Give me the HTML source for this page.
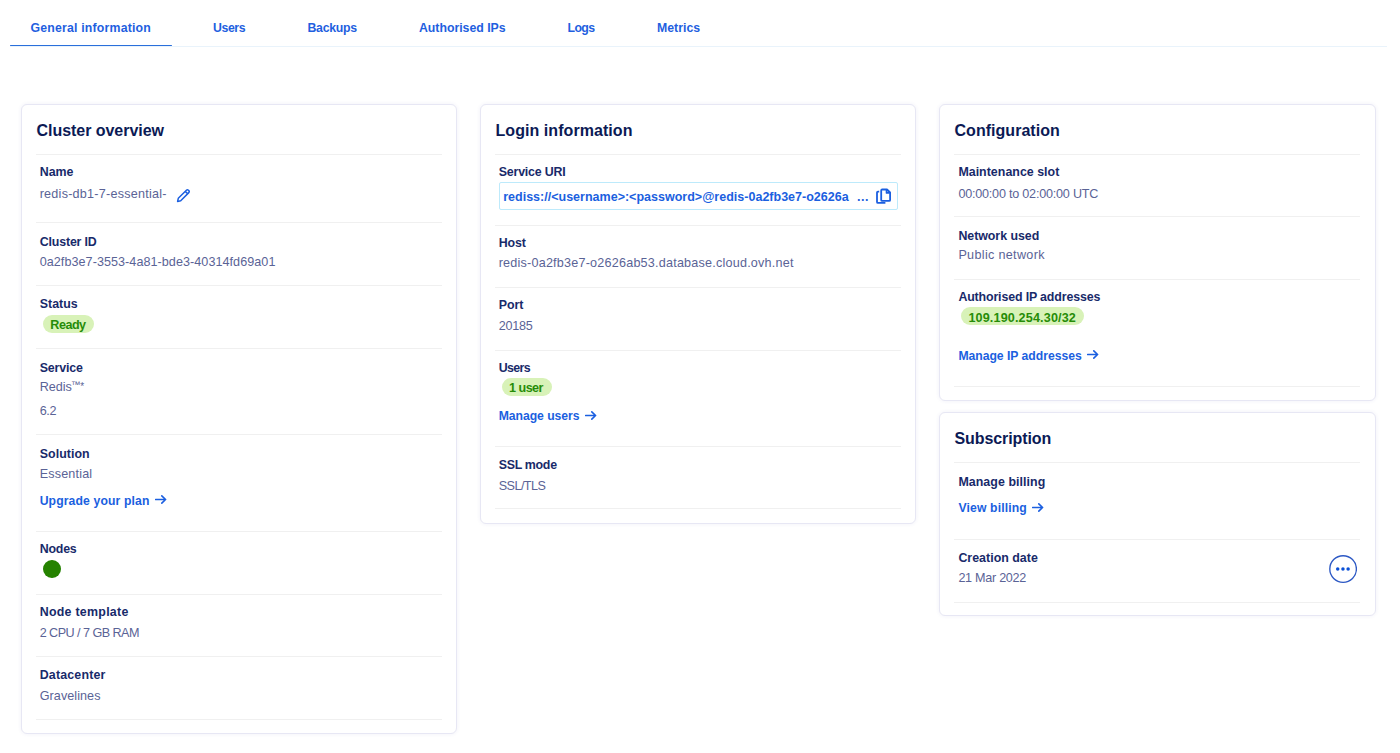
<!DOCTYPE html>
<html><head><meta charset="utf-8"><title>Cluster</title>
<style>
html,body{margin:0;padding:0;background:#fff;width:1400px;height:753px;overflow:hidden;position:relative}
.t{position:absolute;font-family:"Liberation Sans",sans-serif;line-height:20px;white-space:nowrap}
.r{position:absolute;display:block}
</style></head><body>
<div class="t" style="left:30.5px;top:18px;font-size:12.3px;font-weight:700;color:#1f5fe0;letter-spacing:0.19px;">General information</div>
<div class="t" style="left:213px;top:18px;font-size:12.3px;font-weight:700;color:#1f5fe0;letter-spacing:-0.4px;">Users</div>
<div class="t" style="left:307.5px;top:18px;font-size:12.3px;font-weight:700;color:#1f5fe0;letter-spacing:-0.267px;">Backups</div>
<div class="t" style="left:419px;top:18px;font-size:12.3px;font-weight:700;color:#1f5fe0;letter-spacing:-0.013px;">Authorised IPs</div>
<div class="t" style="left:567.5px;top:18px;font-size:12.3px;font-weight:700;color:#1f5fe0;letter-spacing:-0.602px;">Logs</div>
<div class="t" style="left:657px;top:18px;font-size:12.3px;font-weight:700;color:#1f5fe0;letter-spacing:0.0px;">Metrics</div>
<div class="r" style="left:10px;top:46px;width:1377px;height:1px;background:#e9f3fb"></div>
<div class="r" style="left:10px;top:44.5px;width:162px;height:1.6px;background:#2a6fdb;border-radius:1px"></div>
<div class="r" style="left:21px;top:104px;width:436px;height:630px;background:#fff;border:1px solid #e7e7f4;border-radius:6px;box-sizing:border-box;box-shadow:0 0 4px 0 rgba(40,40,150,0.07)"></div>
<div class="t" style="left:36.5px;top:121px;font-size:16px;font-weight:700;color:#0b1a55;letter-spacing:-0.041px;">Cluster overview</div>
<div class="r" style="left:36px;top:154px;width:406px;height:1px;background:#f0f0f0"></div>
<div class="r" style="left:36px;top:222px;width:406px;height:1px;background:#f0f0f0"></div>
<div class="r" style="left:36px;top:285px;width:406px;height:1px;background:#f0f0f0"></div>
<div class="r" style="left:36px;top:348px;width:406px;height:1px;background:#f0f0f0"></div>
<div class="r" style="left:36px;top:434px;width:406px;height:1px;background:#f0f0f0"></div>
<div class="r" style="left:36px;top:531px;width:406px;height:1px;background:#f0f0f0"></div>
<div class="r" style="left:36px;top:594px;width:406px;height:1px;background:#f0f0f0"></div>
<div class="r" style="left:36px;top:656px;width:406px;height:1px;background:#f0f0f0"></div>
<div class="r" style="left:36px;top:719px;width:406px;height:1px;background:#f0f0f0"></div>
<div class="t" style="left:39.7px;top:162px;font-size:12.4px;font-weight:700;color:#182a6a;letter-spacing:0.002px;">Name</div>
<div class="t" style="left:39.7px;top:184px;font-size:12.6px;font-weight:400;color:#5a6396;letter-spacing:0.238px;">redis-db1-7-essential-</div>
<svg class="r" style="left:176px;top:188px" width="15" height="15" viewBox="0 0 15 15"><path d="M1.6 13.4L2.3 10.3L10.4 2.2Q11.4 1.2 12.4 2.2L12.8 2.6Q13.8 3.6 12.8 4.6L4.7 12.7Z M9.2 3.4L11.6 5.8" fill="none" stroke="#1b5fe0" stroke-width="1.5" stroke-linejoin="round"/></svg>
<div class="t" style="left:39.7px;top:232px;font-size:12.4px;font-weight:700;color:#182a6a;letter-spacing:-0.157px;">Cluster ID</div>
<div class="t" style="left:39.7px;top:252px;font-size:12.6px;font-weight:400;color:#5a6396;letter-spacing:0.052px;">0a2fb3e7-3553-4a81-bde3-40314fd69a01</div>
<div class="t" style="left:39.7px;top:294px;font-size:12.4px;font-weight:700;color:#182a6a;letter-spacing:0.04px;">Status</div>
<div class="r" style="left:42.7px;top:315px;width:51px;height:18px;background:#d8f2b8;border-radius:9px"></div>
<div class="t" style="left:50.3px;top:315px;font-size:12.6px;font-weight:700;color:#268c08;letter-spacing:-0.5px;">Ready</div>
<div class="t" style="left:39.7px;top:358px;font-size:12.4px;font-weight:700;color:#182a6a;letter-spacing:-0.135px;">Service</div>
<div class="t" style="left:39.7px;top:377px;font-size:12.6px;font-weight:400;color:#5a6396;">Redis<span style="font-size:9.4px;position:relative;top:-2.7px;letter-spacing:-0.5px;margin-left:-0.9px">™</span><span style="font-size:10px;position:relative;top:-1px;margin-left:0.3px">*</span></div>
<div class="t" style="left:39.7px;top:401px;font-size:12.6px;font-weight:400;color:#5a6396;letter-spacing:-0.4px;">6.2</div>
<div class="t" style="left:39.7px;top:444px;font-size:12.4px;font-weight:700;color:#182a6a;letter-spacing:0.054px;">Solution</div>
<div class="t" style="left:39.7px;top:464px;font-size:12.6px;font-weight:400;color:#5a6396;letter-spacing:0.171px;">Essential</div>
<div class="t" style="left:39.7px;top:491px;font-size:12.2px;font-weight:700;color:#1b5fe0;letter-spacing:0.125px;">Upgrade your plan</div>
<svg class="r" style="left:155px;top:495.2px" width="12" height="9" viewBox="0 0 12 9"><path d="M0.6 4.5H10.6M6.8 0.9L10.6 4.5L6.8 8.1" fill="none" stroke="#1b5fe0" stroke-width="1.6" stroke-linecap="round" stroke-linejoin="round"/></svg>
<div class="t" style="left:39.7px;top:539px;font-size:12.4px;font-weight:700;color:#182a6a;letter-spacing:-0.2px;">Nodes</div>
<div class="r" style="left:43px;top:560px;width:17.5px;height:18px;background:#258200;border-radius:50%"></div>
<div class="t" style="left:39.7px;top:602px;font-size:12.4px;font-weight:700;color:#182a6a;letter-spacing:0.269px;">Node template</div>
<div class="t" style="left:39.7px;top:623px;font-size:12.6px;font-weight:400;color:#5a6396;letter-spacing:-0.533px;">2 CPU / 7 GB RAM</div>
<div class="t" style="left:39.7px;top:665px;font-size:12.4px;font-weight:700;color:#182a6a;letter-spacing:0.176px;">Datacenter</div>
<div class="t" style="left:39.7px;top:686px;font-size:12.6px;font-weight:400;color:#5a6396;letter-spacing:0.065px;">Gravelines</div>
<div class="r" style="left:480px;top:104px;width:436px;height:420px;background:#fff;border:1px solid #e7e7f4;border-radius:6px;box-sizing:border-box;box-shadow:0 0 4px 0 rgba(40,40,150,0.07)"></div>
<div class="t" style="left:495.5px;top:121px;font-size:16px;font-weight:700;color:#0b1a55;letter-spacing:0.062px;">Login information</div>
<div class="r" style="left:494.7px;top:154px;width:406.59999999999997px;height:1px;background:#f0f0f0"></div>
<div class="r" style="left:494.7px;top:225px;width:406.59999999999997px;height:1px;background:#f0f0f0"></div>
<div class="r" style="left:494.7px;top:287px;width:406.59999999999997px;height:1px;background:#f0f0f0"></div>
<div class="r" style="left:494.7px;top:350px;width:406.59999999999997px;height:1px;background:#f0f0f0"></div>
<div class="r" style="left:494.7px;top:446px;width:406.59999999999997px;height:1px;background:#f0f0f0"></div>
<div class="r" style="left:494.7px;top:508px;width:406.59999999999997px;height:1px;background:#f0f0f0"></div>
<div class="t" style="left:498.7px;top:162px;font-size:12.4px;font-weight:700;color:#182a6a;letter-spacing:-0.18px;">Service URI</div>
<div class="r" style="left:499px;top:182px;width:399px;height:28px;border:1px solid #bdeafb;border-radius:2px;box-sizing:border-box;background:#fff"></div>
<div class="t" style="left:503.2px;top:187px;font-size:12.5px;font-weight:700;color:#1b5fe0;letter-spacing:0.009px;">rediss://&lt;username&gt;:&lt;password&gt;@redis-0a2fb3e7-o2626a</div>
<div class="t" style="left:856.5px;top:187px;font-size:12.5px;font-weight:700;color:#1b5fe0;">…</div>
<svg class="r" style="left:875px;top:187px" width="17" height="18" viewBox="0 0 17 18"><g fill="none" stroke="#1b5fe0" stroke-width="1.8" stroke-linejoin="round"><path d="M4.2 4.6H3Q2 4.6 2 5.6V14.9Q2 15.9 3 15.9H10.4"/><path d="M7.2 2.5H12L15.1 5.5V12.9Q15.1 13.9 14.1 13.9H7.2Q6.2 13.9 6.2 12.9V3.5Q6.2 2.5 7.2 2.5Z"/><path d="M11.6 2.8V5.9H14.8"/></g></svg>
<div class="t" style="left:498.7px;top:233px;font-size:12.4px;font-weight:700;color:#182a6a;letter-spacing:-0.134px;">Host</div>
<div class="t" style="left:498.7px;top:253px;font-size:12.6px;font-weight:400;color:#5a6396;letter-spacing:0.212px;">redis-0a2fb3e7-o2626ab53.database.cloud.ovh.net</div>
<div class="t" style="left:498.7px;top:295px;font-size:12.4px;font-weight:700;color:#182a6a;">Port</div>
<div class="t" style="left:498.7px;top:316px;font-size:12.6px;font-weight:400;color:#5a6396;letter-spacing:-0.25px;">20185</div>
<div class="t" style="left:498.7px;top:358px;font-size:12.4px;font-weight:700;color:#182a6a;letter-spacing:-0.6px;">Users</div>
<div class="r" style="left:502.2px;top:378.4px;width:49.7px;height:17.5px;background:#d8f2b8;border-radius:9px"></div>
<div class="t" style="left:509px;top:378px;font-size:12.6px;font-weight:700;color:#268c08;letter-spacing:-0.52px;">1 user</div>
<div class="t" style="left:498.7px;top:406px;font-size:12.2px;font-weight:700;color:#1b5fe0;letter-spacing:-0.038px;">Manage users</div>
<svg class="r" style="left:585px;top:410.5px" width="12" height="9" viewBox="0 0 12 9"><path d="M0.6 4.5H10.6M6.8 0.9L10.6 4.5L6.8 8.1" fill="none" stroke="#1b5fe0" stroke-width="1.6" stroke-linecap="round" stroke-linejoin="round"/></svg>
<div class="t" style="left:498.7px;top:455px;font-size:12.4px;font-weight:700;color:#182a6a;letter-spacing:-0.286px;">SSL mode</div>
<div class="t" style="left:498.7px;top:476px;font-size:12.6px;font-weight:400;color:#5a6396;letter-spacing:-0.535px;">SSL/TLS</div>
<div class="r" style="left:939px;top:104px;width:437px;height:297px;background:#fff;border:1px solid #e7e7f4;border-radius:6px;box-sizing:border-box;box-shadow:0 0 4px 0 rgba(40,40,150,0.07)"></div>
<div class="t" style="left:954.5px;top:121px;font-size:16px;font-weight:700;color:#0b1a55;letter-spacing:0.034px;">Configuration</div>
<div class="r" style="left:954px;top:154px;width:406px;height:1px;background:#f0f0f0"></div>
<div class="r" style="left:954px;top:216px;width:406px;height:1px;background:#f0f0f0"></div>
<div class="r" style="left:954px;top:279px;width:406px;height:1px;background:#f0f0f0"></div>
<div class="r" style="left:954px;top:386px;width:406px;height:1px;background:#f0f0f0"></div>
<div class="t" style="left:958.4px;top:162px;font-size:12.4px;font-weight:700;color:#182a6a;letter-spacing:0.026px;">Maintenance slot</div>
<div class="t" style="left:958.4px;top:184px;font-size:12.6px;font-weight:400;color:#5a6396;letter-spacing:-0.217px;">00:00:00 to 02:00:00 UTC</div>
<div class="t" style="left:958.4px;top:226px;font-size:12.4px;font-weight:700;color:#182a6a;letter-spacing:-0.038px;">Network used</div>
<div class="t" style="left:958.4px;top:245px;font-size:12.6px;font-weight:400;color:#5a6396;letter-spacing:0.321px;">Public network</div>
<div class="t" style="left:958.4px;top:287px;font-size:12.4px;font-weight:700;color:#182a6a;letter-spacing:-0.145px;">Authorised IP addresses</div>
<div class="r" style="left:961px;top:307.2px;width:123px;height:17.6px;background:#d8f2b8;border-radius:9px"></div>
<div class="t" style="left:968.4px;top:308px;font-size:12.6px;font-weight:700;color:#268c08;letter-spacing:0.151px;">109.190.254.30/32</div>
<div class="t" style="left:958.4px;top:346px;font-size:12.2px;font-weight:700;color:#1b5fe0;letter-spacing:-0.024px;">Manage IP addresses</div>
<svg class="r" style="left:1087px;top:349.8px" width="12" height="9" viewBox="0 0 12 9"><path d="M0.6 4.5H10.6M6.8 0.9L10.6 4.5L6.8 8.1" fill="none" stroke="#1b5fe0" stroke-width="1.6" stroke-linecap="round" stroke-linejoin="round"/></svg>
<div class="r" style="left:939px;top:412px;width:437px;height:204px;background:#fff;border:1px solid #e7e7f4;border-radius:6px;box-sizing:border-box;box-shadow:0 0 4px 0 rgba(40,40,150,0.07)"></div>
<div class="t" style="left:954.5px;top:429px;font-size:16px;font-weight:700;color:#0b1a55;letter-spacing:-0.091px;">Subscription</div>
<div class="r" style="left:954px;top:462px;width:406px;height:1px;background:#f0f0f0"></div>
<div class="r" style="left:954px;top:539px;width:406px;height:1px;background:#f0f0f0"></div>
<div class="r" style="left:954px;top:602px;width:406px;height:1px;background:#f0f0f0"></div>
<div class="t" style="left:958.4px;top:472px;font-size:12.4px;font-weight:700;color:#182a6a;letter-spacing:0.06px;">Manage billing</div>
<div class="t" style="left:958.4px;top:498px;font-size:12.2px;font-weight:700;color:#1b5fe0;letter-spacing:0.144px;">View billing</div>
<svg class="r" style="left:1031.5px;top:502.8px" width="12" height="9" viewBox="0 0 12 9"><path d="M0.6 4.5H10.6M6.8 0.9L10.6 4.5L6.8 8.1" fill="none" stroke="#1b5fe0" stroke-width="1.6" stroke-linecap="round" stroke-linejoin="round"/></svg>
<div class="t" style="left:958.4px;top:548px;font-size:12.4px;font-weight:700;color:#182a6a;letter-spacing:0.019px;">Creation date</div>
<div class="t" style="left:958.4px;top:568px;font-size:12.6px;font-weight:400;color:#5a6396;letter-spacing:-0.28px;">21 Mar 2022</div>
<svg class="r" style="left:1329px;top:555px" width="28" height="28" viewBox="0 0 28 28"><circle cx="14.1" cy="14" r="13.3" fill="#fff" stroke="#2c58c4" stroke-width="1.35"/><circle cx="8.7" cy="14" r="1.75" fill="#0a4fd6"/><circle cx="13.95" cy="14" r="1.75" fill="#0a4fd6"/><circle cx="19.1" cy="14" r="1.75" fill="#0a4fd6"/></svg>
</body></html>
